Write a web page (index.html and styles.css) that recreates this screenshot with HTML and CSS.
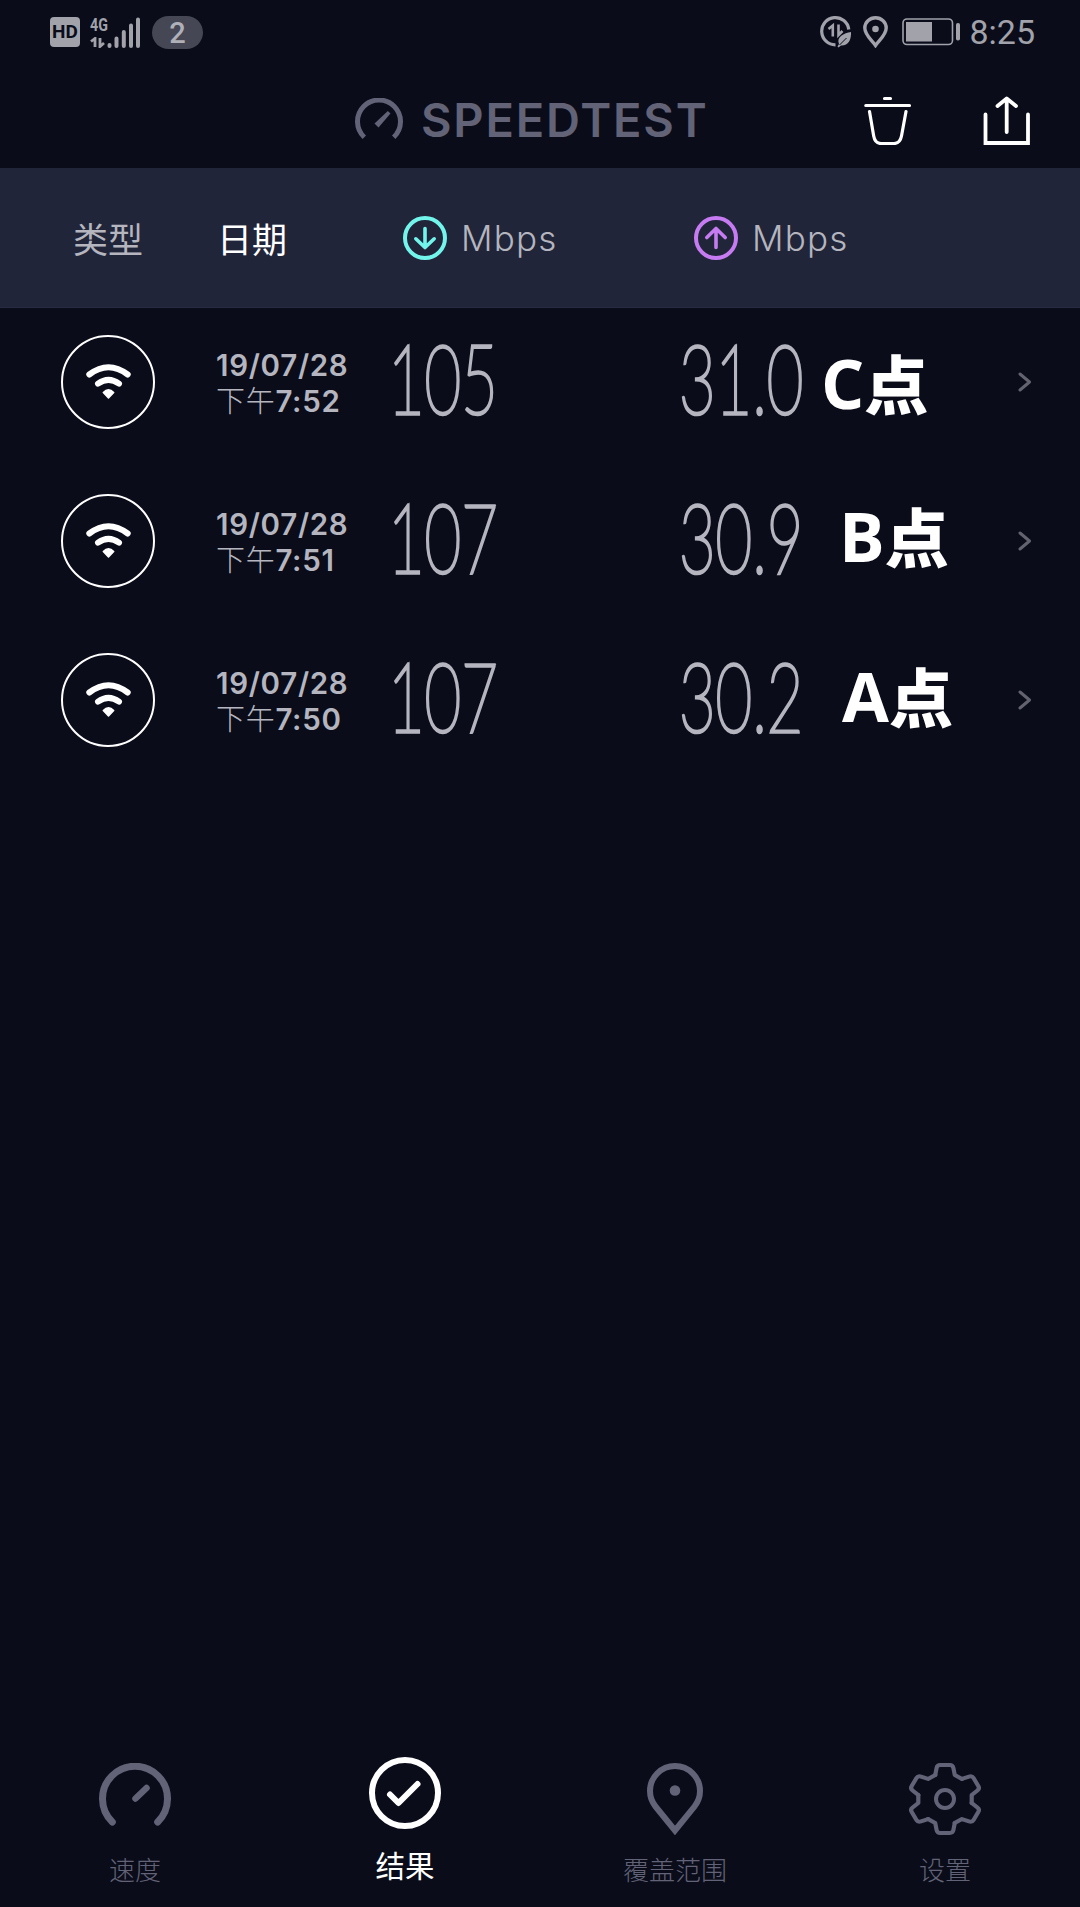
FILE: index.html
```html
<!DOCTYPE html>
<html lang="zh-CN">
<head>
    <meta charset="UTF-8">
    <meta name="viewport" content="width=device-width, initial-scale=1.0">
    <title>Speedtest</title>
    <link rel="stylesheet" href="styles.css">
</head>
<body>
    <svg class="defs" width="0" height="0">
        <symbol id="wifi" viewBox="0 0 94 94">
            <path d="M28.3 39.5Q47.5 25 66.7 39.5M37 48.7Q47.5 41 58 48.7" fill="none" stroke="currentColor" stroke-width="6" stroke-linecap="round"/>
            <path d="M42.3 57.5Q47.5 52 52.7 57.5L47.5 63Z" fill="currentColor" stroke="currentColor" stroke-width="1.5" stroke-linejoin="round"/>
        </symbol>
        <symbol id="chevron" viewBox="0 0 14 20">
            <path d="M2 2L11.5 10L2 18" fill="none" stroke="currentColor" stroke-width="3" stroke-linecap="round" stroke-linejoin="round"/>
        </symbol>
    </svg>

    <div class="status-bar">
        <div class="status-left">
            <span class="hd">HD</span>
            <div class="network">
                <div class="net-type">
                    <span class="net-label">4G</span>
                    <svg width="15" height="11" viewBox="0 0 15 11">
                        <path d="M1 4.5L5 1.5V10M10 1V9.5L14 6" fill="none" stroke="currentColor" stroke-width="2.8"/>
                    </svg>
                </div>
                <svg width="34" height="31" viewBox="0 0 34 31">
                    <path d="M2.5 28V29M9.5 21.5V29M16.8 15V29M24 8.5V29M31 2.5V29" stroke="currentColor" stroke-width="4" stroke-linecap="round"/>
                </svg>
            </div>
            <span class="pill">2</span>
        </div>
        <div class="status-right">
            <svg class="saver" width="32" height="33" viewBox="0 0 32 33">
                <path d="M15.5 29.8A13.6 13.6 0 1 1 28.8 14.5" fill="none" stroke="currentColor" stroke-width="3.2"/>
                <path d="M8.5 14L12.8 10.5V21.5M18.5 9.5V20L22.5 16" fill="none" stroke="currentColor" stroke-width="2.6"/>
                <path d="M31 17C31.5 25 28 31 21 30.5L18.5 32.5L17.5 31.5L19 29C16 22 24 18 31 17Z" fill="currentColor"/>
                <path d="M19.5 30L26.5 23" stroke="#0a0c1a" stroke-width="1"/>
            </svg>
            <svg class="place" width="25" height="32" viewBox="0 0 25 32">
                <path d="M12.5 29.5C9 24.5 1.8 19 1.8 12A10.7 10.2 0 0 1 23.2 12C23.2 19 16 24.5 12.5 29.5Z" fill="none" stroke="currentColor" stroke-width="3.4"/>
                <circle cx="12.5" cy="13" r="3.3" fill="currentColor"/>
            </svg>
            <svg class="battery" width="58" height="28" viewBox="0 0 58 28">
                <rect x="1" y="1" width="49.5" height="25.5" rx="4" fill="none" stroke="currentColor" stroke-width="1.6"/>
                <rect x="4" y="4" width="26" height="19.5" fill="currentColor"/>
                <rect x="54" y="5" width="4" height="17.5" rx="1.8" fill="currentColor"/>
            </svg>
            <span class="clock">8:25</span>
        </div>
    </div>

    <header class="app-header">
        <div class="brand">
            <svg width="50" height="44" viewBox="0 0 50 44">
                <path d="M10.3 39.2A21.5 21.5 0 1 1 39.7 39.2" fill="none" stroke="currentColor" stroke-width="5"/>
                <path d="M33.8 13L36.5 15.5L24.5 29.5L20.5 25.5Z" fill="currentColor"/>
            </svg>
            <span class="brand-name">SPEEDTEST</span>
        </div>
        <div class="actions">
            <svg width="48" height="50" viewBox="0 0 48 50">
                <path d="M20.5 3.5H26.5M1.8 10.5H45.5M5.5 16.5L9.7 41Q11 48.5 17 48.5H30Q36 48.5 37.5 41L42 16.5" fill="none" stroke="currentColor" stroke-width="3.2" stroke-linecap="round"/>
            </svg>
            <svg width="48" height="50" viewBox="0 0 48 50">
                <path d="M2.5 19.5V48H45V19.5" fill="none" stroke="currentColor" stroke-width="3.8" stroke-linecap="round"/>
                <path d="M23.7 37V4M14.5 11L23.7 3.5L33 11" fill="none" stroke="currentColor" stroke-width="3.8" stroke-linecap="round" stroke-linejoin="round"/>
            </svg>
        </div>
    </header>

    <div class="column-head">
        <span class="col-type">类型</span>
        <span class="col-date">日期</span>
        <span class="col-speed">
            <svg class="down" width="44" height="44" viewBox="0 0 44 44">
                <circle cx="22" cy="22" r="20" fill="none" stroke="currentColor" stroke-width="4"/>
                <path d="M22 12.5V31.5M12.8 22.8L22 31.5L31.2 22.8" fill="none" stroke="currentColor" stroke-width="3.6" stroke-linecap="round" stroke-linejoin="round"/>
            </svg>
            <span>Mbps</span>
        </span>
        <span class="col-speed">
            <svg class="up" width="44" height="44" viewBox="0 0 44 44">
                <circle cx="22" cy="22" r="20" fill="none" stroke="currentColor" stroke-width="4"/>
                <path d="M22 31.5V12.5M12.8 21.5L22 12.5L31.2 21.5" fill="none" stroke="currentColor" stroke-width="3.6" stroke-linecap="round" stroke-linejoin="round"/>
            </svg>
            <span>Mbps</span>
        </span>
    </div>

    <main class="results">
        <div class="row">
            <div class="type"><svg class="wifi"><use href="#wifi"/></svg></div>
            <div class="date">19/07/28<br><span class="half">下午</span>7:52</div>
            <div class="speed"><span>105</span></div>
            <div class="speed"><span>31.0</span></div>
            <div class="note note-c">C<span>点</span></div>
            <svg class="chevron"><use href="#chevron"/></svg>
        </div>
        <div class="row">
            <div class="type"><svg class="wifi"><use href="#wifi"/></svg></div>
            <div class="date">19/07/28<br><span class="half">下午</span>7:51</div>
            <div class="speed"><span>107</span></div>
            <div class="speed"><span>30.9</span></div>
            <div class="note note-b">B<span>点</span></div>
            <svg class="chevron"><use href="#chevron"/></svg>
        </div>
        <div class="row">
            <div class="type"><svg class="wifi"><use href="#wifi"/></svg></div>
            <div class="date">19/07/28<br><span class="half">下午</span>7:50</div>
            <div class="speed"><span>107</span></div>
            <div class="speed"><span>30.2</span></div>
            <div class="note note-a">A<span>点</span></div>
            <svg class="chevron"><use href="#chevron"/></svg>
        </div>
    </main>

    <nav class="tabs">
        <a class="tab">
            <svg width="72" height="72" viewBox="0 0 72 72">
                <path d="M13.3 59A32.5 32.5 0 1 1 58.7 59" fill="none" stroke="currentColor" stroke-width="7" stroke-linecap="round"/>
                <path d="M36.5 35.5L47.5 25" stroke="currentColor" stroke-width="6.5" stroke-linecap="round"/>
            </svg>
            <span>速度</span>
        </a>
        <a class="tab active">
            <svg width="72" height="72" viewBox="0 0 72 72">
                <circle cx="36" cy="36" r="33" fill="none" stroke="currentColor" stroke-width="6"/>
                <path d="M21 37.5L29.5 46L48.5 27" fill="none" stroke="currentColor" stroke-width="6" stroke-linecap="round" stroke-linejoin="round"/>
            </svg>
            <span>结果</span>
        </a>
        <a class="tab">
            <svg width="72" height="72" viewBox="0 0 72 72">
                <path d="M36 67.5L16.5 43.5C13 39 11 34 11 28A25 25 0 0 1 61 28C61 34 59 39 55.5 43.5Z" fill="none" stroke="currentColor" stroke-width="6"/>
                <circle cx="36" cy="27.5" r="5.3" fill="currentColor"/>
            </svg>
            <span>覆盖范围</span>
        </a>
        <a class="tab">
            <svg width="72" height="72" viewBox="-36 -36 72 72" fill="none" stroke="currentColor" stroke-width="4" stroke-linecap="round" stroke-linejoin="round">
                <g transform="scale(1.05 1)">
                    <path id="tooth" d="M-9.3 -24L-8 -31Q-7.5 -34 -4.5 -34H4.5Q7.5 -34 8 -31L9.3 -24L16.2 -20"/>
                    <use href="#tooth" transform="rotate(60)"/>
                    <use href="#tooth" transform="rotate(120)"/>
                    <use href="#tooth" transform="rotate(180)"/>
                    <use href="#tooth" transform="rotate(240)"/>
                    <use href="#tooth" transform="rotate(300)"/>
                </g>
                <circle r="9"/>
            </svg>
            <span>设置</span>
        </a>
    </nav>
</body>
</html>
```

FILE: styles.css
```css
* {
    box-sizing: border-box;
}
body {
    margin: 0;
    height: 1907px;
    display: flex;
    flex-direction: column;
    background: #0a0c1a;
    color: #b4b5bf;
    font-family: Inter, "Noto Sans CJK SC", sans-serif;
    overflow: hidden;
}
svg {
    display: block;
    flex: none;
}
.defs {
    position: absolute;
}

/* status bar */
.status-bar {
    height: 70px;
    padding: 0 45px 6px 50px;
    display: flex;
    justify-content: space-between;
    align-items: center;
    color: #a1a2aa;
}
.status-left,
.status-right {
    display: flex;
    align-items: center;
}
.status-right {
    padding-bottom: 1px;
}
.hd {
    width: 30px;
    height: 30px;
    border-radius: 4px;
    background: #a1a2aa;
    color: #0a0c1a;
    font: 700 19px/30px Roboto, sans-serif;
    text-align: center;
}
.network {
    display: flex;
    align-items: flex-end;
    margin-left: 10px;
}
.net-type {
    width: 17px;
    height: 31px;
    display: flex;
    flex-direction: column;
    justify-content: space-between;
}
.net-label {
    font: 700 19px/15px Roboto, sans-serif;
    transform: scaleX(0.75);
    transform-origin: left;
}
.pill {
    width: 51px;
    height: 33px;
    margin-left: 11px;
    border-radius: 17px;
    background: #464755;
    color: #b0b1b8;
    font: 500 29px/34px Roboto, sans-serif;
    text-align: center;
}
.place {
    margin-left: 11px;
}
.battery {
    margin-left: 14px;
}
.clock {
    margin-left: 9px;
    padding-top: 1px;
    font: 400 34px/40px Roboto, sans-serif;
}

/* app header */
.app-header {
    height: 98px;
    padding: 1px 49px 0 354px;
    display: flex;
    align-items: center;
    justify-content: space-between;
}
.brand {
    display: flex;
    align-items: center;
    gap: 17px;
    color: #626377;
}
.brand-name {
    font-size: 47px;
    font-weight: 600;
    line-height: 50px;
    letter-spacing: 1.8px;
}
.actions {
    display: flex;
    gap: 71px;
    color: #fff;
}

/* column titles */
.column-head {
    height: 140px;
    display: grid;
    grid-template-columns: 216px 176px 291px 1fr;
    align-items: center;
    background: #212539;
    border-bottom: 1px solid #272b41;
    font-size: 35px;
}
.col-type {
    text-align: center;
}
.col-date {
    padding-left: 1px;
    color: #fff;
}
.col-speed {
    display: flex;
    align-items: center;
    gap: 14px;
    padding-left: 11px;
    font-size: 35px;
    font-weight: 300;
    letter-spacing: 1.2px;
}
.col-speed span {
    padding-top: 1px;
}
.down {
    color: #72f6ec;
}
.up {
    color: #c67bf2;
}

/* result rows */
.results {
    flex: 1;
}
.row {
    height: 148px;
    margin-bottom: 11px;
    display: grid;
    grid-template-columns: 216px 176px 291px 141px 194px 62px;
    align-items: center;
}
.type {
    width: 94px;
    height: 94px;
    margin-left: 61px;
    border: 2px solid #fff;
    border-radius: 50%;
    color: #fff;
}
.wifi {
    width: 94px;
    height: 94px;
    margin: -2px;
}
.date {
    padding-top: 1px;
    font-size: 29.5px;
    font-weight: 600;
    line-height: 36px;
    letter-spacing: 0.7px;
    white-space: nowrap;
}
.half {
    font-family: "Noto Sans CJK SC", sans-serif;
    font-weight: 300;
    font-size: 29px;
    line-height: 30px;
}
.speed {
    margin: -11px 0 0 -4px;
}
.speed span {
    display: inline-block;
    font: 100 97px/98px Lato, sans-serif;
    -webkit-text-stroke: 3.6px #b4b5bf;
    transform: scaleX(0.65);
    transform-origin: left;
}
.note {
    color: #fff;
    font: 700 68px/80px "Open Sans", "Noto Sans CJK SC", sans-serif;
    white-space: nowrap;
}
.note span {
    font-family: "Noto Sans CJK SC", sans-serif;
    font-weight: 900;
    font-size: 64px;
}
.note-c {
    margin-left: -3px;
}
.note-b {
    padding-left: 15px;
    margin-top: -12px;
}
.note-a {
    padding-left: 18px;
    margin-top: -11px;
}
.chevron {
    width: 14px;
    height: 20px;
    color: #62636f;
}

/* bottom tabs */
.tabs {
    height: 157px;
    display: grid;
    grid-template-columns: repeat(4, 1fr);
}
.tab {
    display: flex;
    flex-direction: column;
    align-items: center;
    padding-top: 13px;
    color: #626377;
    font-size: 26px;
    font-weight: 300;
    line-height: 36px;
}
.tab span {
    margin-top: 18px;
}
.tab.active {
    padding-top: 7px;
    color: #fff;
    font-size: 29.5px;
    font-weight: 400;
}
.tab.active span {
    margin-top: 19px;
}
```
